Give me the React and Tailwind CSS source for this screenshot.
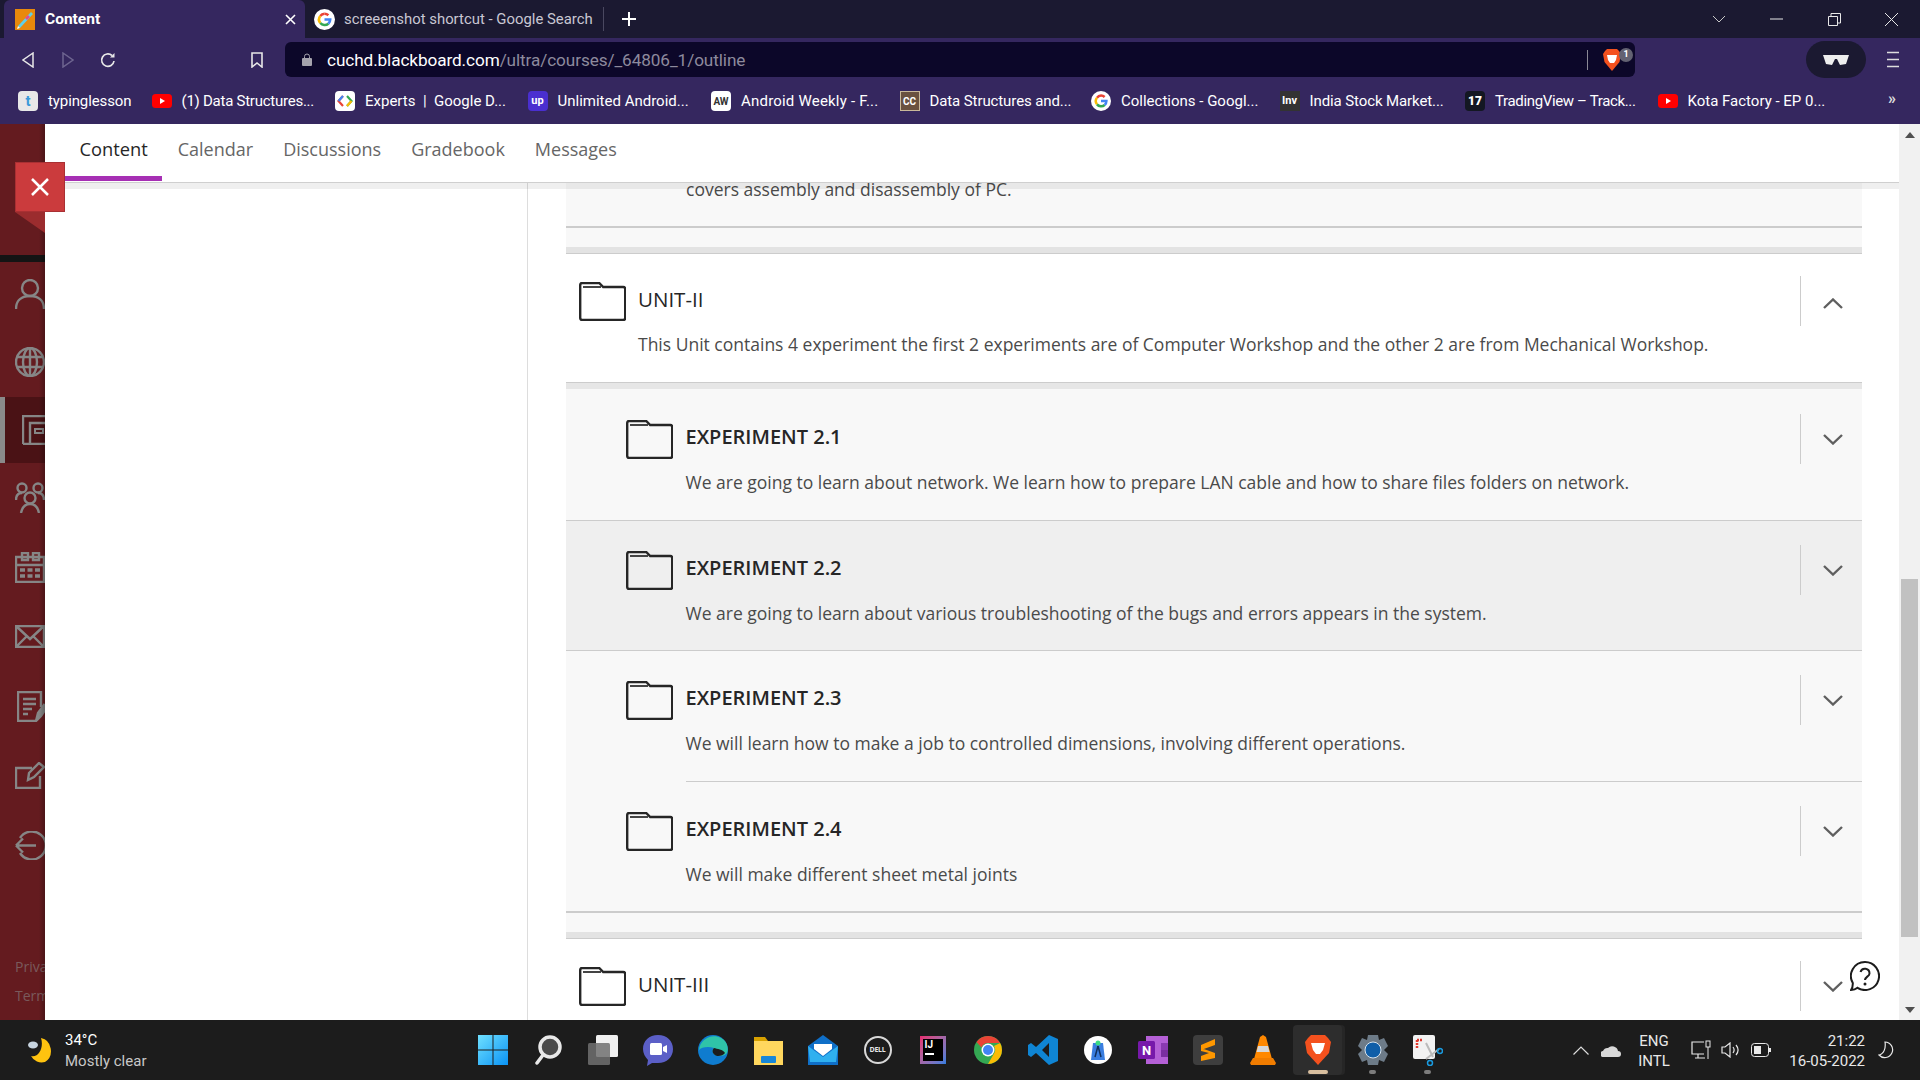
import React from "react";

const ui = { fontFamily: "Roboto, 'Noto Sans', sans-serif" };
const bb = { fontFamily: "'Open Sans', sans-serif" };

const GoogleG = ({ s = 21 }) => (
  <svg width={s} height={s} viewBox="0 0 24 24" className="shrink-0">
    <circle cx="12" cy="12" r="12" fill="#fff" />
    <path d="M12 5.5a6.5 6.5 0 0 1 4.4 1.7" stroke="#ea4335" strokeWidth="3" fill="none" />
    <path d="M7.2 8a6.5 6.5 0 0 1 4.8-2.5" stroke="#ea4335" strokeWidth="3" fill="none" />
    <path d="M7.2 16a6.5 6.5 0 0 1 0-8" stroke="#fbbc05" strokeWidth="3" fill="none" />
    <path d="M7.2 16a6.5 6.5 0 0 0 9.2.8" stroke="#34a853" strokeWidth="3" fill="none" />
    <path d="M16.4 16.8a6.5 6.5 0 0 0 2.1-4.8H12" stroke="#4285f4" strokeWidth="3" fill="none" />
  </svg>
);
const Yt = () => (
  <svg width="20" height="14" viewBox="0 0 20 14" className="shrink-0">
    <rect width="20" height="14" rx="3.5" fill="#f00" />
    <path d="M8 4l5 3-5 3z" fill="#fff" />
  </svg>
);
const Tile = ({ className, children }) => (
  <span className={`w-5 h-5 shrink-0 flex items-center justify-center overflow-hidden ${className}`}>{children}</span>
);

const bookmarks = [
  { t: "typinglesson", w: "w-[83px] tracking-[-0.1px]", i: <Tile className="bg-[#e8e8e8] rounded-sm text-[#3b9ad9] text-[15px] font-bold">t</Tile> },
  { t: "(1) Data Structures...", w: "w-[133px] tracking-[-0.25px]", i: <Yt /> },
  { t: "Experts  |  Google D...", w: "w-[142px]", i: (
    <Tile className="bg-white rounded-sm">
      <svg width="16" height="12" viewBox="0 0 16 12" fill="none"><path d="M6 1L1.500 6 6 11" stroke="#ea4335" strokeWidth="2.200" /><path d="M10 1l4.500 5L10 11" stroke="#34a853" strokeWidth="2.200" /><path d="M6 1L1.500 6" stroke="#4285f4" strokeWidth="2.200" /><path d="M14.500 6L10 11" stroke="#fbbc05" strokeWidth="2.200" /></svg>
    </Tile>
  ) },
  { t: "Unlimited Android...", w: "w-[133px]", i: <Tile className="bg-[#4a2fd0] rounded-sm text-white text-[11px] font-bold">up</Tile> },
  { t: "Android Weekly - F...", w: "w-[138px] tracking-[0.2px]", i: <Tile className="bg-white rounded-sm text-[#333] text-[10px] font-bold">AW</Tile> },
  { t: "Data Structures and...", w: "w-[141px] tracking-[-0.1px]", i: <Tile className="bg-[#6a5240] border border-[#c8b89a] text-white text-[10px] font-bold">CC</Tile> },
  { t: "Collections - Googl...", w: "w-[138px]", i: <GoogleG s={20} /> },
  { t: "India Stock Market...", w: "w-[135px] tracking-[-0.1px]", i: <Tile className="bg-[#333] text-white text-[11px] font-bold">Inv</Tile> },
  { t: "TradingView – Track...", w: "w-[142px] tracking-[-0.35px]", i: <Tile className="bg-[#131722] rounded text-white text-[12px] font-black">17</Tile> },
  { t: "Kota Factory - EP 0...", w: "w-[134px]", i: <Yt /> },
];

const TabBar = () => (
  <div className="h-[38px] bg-[#1b1931] flex items-stretch text-white shrink-0" style={ui}>
    <div className="ml-1 w-[301px] bg-[#35275f] rounded-t-md flex items-center pl-[11px] pr-[9px]">
      <svg width="20" height="21" viewBox="0 0 20 21" className="shrink-0">
        <rect width="20" height="21" fill="#e8890c" />
        <path d="M3 17L16 3l2 2L5 19z" fill="#5fd0e8" />
        <path d="M3 17l-1 3 3-1z" fill="#fff" />
        <path d="M13 6l2 2-3 3-2-2z" fill="#e84a8a" />
      </svg>
      <span className="ml-2.5 text-[15.5px] font-bold flex-1 mt-px">Content</span>
      <svg width="11" height="11" viewBox="0 0 11 11"><path d="M1 1l9 9M10 1l-9 9" stroke="#fff" strokeWidth="1.6" /></svg>
    </div>
    <div className="flex items-center pl-[9px] w-[298px]">
      <GoogleG />
      <span className="ml-[9px] text-[14.9px] text-[#c9c7d3] whitespace-nowrap">screeenshot shortcut - Google Search</span>
    </div>
    <div className="w-px h-6 bg-[#4a4860] self-center" />
    <svg width="16" height="16" viewBox="0 0 16 16" className="self-center ml-[17px]"><path d="M8 1v14M1 8h14" stroke="#fff" strokeWidth="2" /></svg>
    <div className="flex-1" />
    <div className="flex items-center mr-[22px] gap-[44.5px]">
      <svg width="14" height="8" viewBox="0 0 14 8"><path d="M1 1l6 6 6-6" stroke="#c8c8c8" fill="none" /></svg>
      <svg width="13" height="2" viewBox="0 0 13 2"><path d="M0 1h13" stroke="#e8e8e8" /></svg>
      <svg width="13" height="13" viewBox="0 0 13 13"><path d="M.5 3.5h9v9h-9zM3 3V.5h9.5V10H10" stroke="#e8e8e8" fill="none" /></svg>
      <svg width="13" height="13" viewBox="0 0 13 13"><path d="M0 0l13 13M13 0L0 13" stroke="#e8e8e8" /></svg>
    </div>
  </div>
);

const Toolbar = () => (
  <div className="h-10 bg-[#35275f] flex items-center shrink-0 pt-[3px] text-white" style={ui}>
    <svg width="12" height="16" viewBox="0 0 12 16" className="ml-[22px]"><path d="M11 1L1 8l10 7z" stroke="#e8e8e8" strokeWidth="1.5" fill="none" /></svg>
    <svg width="12" height="16" viewBox="0 0 12 16" className="ml-7"><path d="M1 1l10 7-10 7z" stroke="#6e6590" strokeWidth="1.5" fill="none" /></svg>
    <svg width="16" height="16" viewBox="0 0 16 16" className="ml-[26px]"><path d="M14 9a6.2 6.2 0 1 1-2-5.5" stroke="#e8e8e8" strokeWidth="1.7" fill="none" /><path d="M14.5 1v4.5H10z" fill="#e8e8e8" /></svg>
    <svg width="12" height="16" viewBox="0 0 12 16" className="ml-[135px]"><path d="M1 1h10v14l-5-4-5 4z" stroke="#e8e8e8" strokeWidth="1.6" fill="none" /></svg>
    <div className="ml-[22px] w-[1350px] h-[35px] bg-[#0c0729] rounded-md flex items-center pl-[17px] pr-[3px]">
      <svg width="10" height="13" viewBox="0 0 10 13"><rect y="5" width="10" height="8" rx="1" fill="#a5a3ad" /><path d="M2.5 5V3.5a2.5 2.5 0 0 1 5 0V5" stroke="#a5a3ad" fill="none" /></svg>
      <span className="ml-[15px] mt-[2px] text-[17.2px] whitespace-nowrap tracking-[-0.1px]">cuchd.blackboard.com<span className="text-[#8d8a9d]">/ultra/courses/_64806_1/outline</span></span>
      <div className="flex-1" />
      <div className="w-px h-5 bg-[#8a8895]" />
      <div className="relative ml-[15px] w-[29px] h-[22px]">
        <svg width="18" height="22" viewBox="0 0 18 22"><path d="M4 0h10l2 2 2 3-1.5 8L9 22 1.500 13 0 5l2-3z" fill="#f4511e" /><path d="M4 6h10l-1 5-2 3H7l-2-3z" fill="#fff" /></svg>
        <span className="absolute -right-[1px] -top-[1px] w-[14px] h-[14px] rounded-full bg-[#636272] text-[9px] font-bold flex items-center justify-center">1</span>
      </div>
    </div>
    <div className="ml-[171px] w-[60px] h-[37px] bg-[#1b1931] rounded-full flex items-center justify-center">
      <svg width="26" height="10" viewBox="0 0 26 10"><path d="M0 0h26l-1 3-2 6-6 1-3-6h-2l-3 6-6-1-2-6z" fill="#eee" /></svg>
    </div>
    <svg width="12" height="17" viewBox="0 0 12 17" className="ml-[21px]"><path d="M0 1.500h12M0 8.500h12M0 15.500h12" stroke="#ddd" strokeWidth="1.6" /></svg>
  </div>
);

const Bookmarks = () => (
  <div className="h-[46px] bg-[#35275f] flex items-center pl-[18px] shrink-0 text-white relative" style={ui}>
    {bookmarks.map((b) => (
      <div key={b.t} className="flex items-center gap-2.5 mr-[20.5px]">
        {b.i}
        <span className={`${b.w} text-[15px] mt-px whitespace-pre`}>{b.t}</span>
      </div>
    ))}
    <div className="flex-1" />
    <span className="mr-[24px] text-[16px] font-bold text-[#ddd] -mt-1">»</span>
  </div>
);

const Ic = ({ h = 30, w = 30, view = "0 0 30 30", children }) => (
  <svg width={w} height={h} viewBox={view} fill="none" stroke="#868686" strokeWidth="2.4" className="shrink-0">{children}</svg>
);

const Sidebar = () => (
  <div className="relative w-[45px] shrink-0 bg-[#641b1f] flex flex-col overflow-hidden">
    <div className="h-[131px] shrink-0" />
    <div className="h-[7px] shrink-0 bg-[#141414]" />
    <div className="h-[64px] shrink-0 pl-[15px] flex items-center">
      <Ic><circle cx="15" cy="9" r="8" /><path d="M1 30c0-9 6-13 14-13s14 4 14 13" /></Ic>
    </div>
    <div className="h-[71px] shrink-0 pl-[15px] flex items-center">
      <Ic><circle cx="15" cy="15" r="14" /><ellipse cx="15" cy="15" rx="7" ry="14" /><path d="M15 1v28M2 10h26M2 20h26" /></Ic>
    </div>
    <div className="h-[66px] shrink-0 bg-[#4a1215] border-l-[5px] border-[#8a8a8a] pl-[17px] flex items-center">
      <Ic view="0 0 30 30"><path d="M1 29V1h29M1 29h29M8 29V8h22" /><rect x="13" y="14" width="8" height="4" strokeWidth="2" /></Ic>
    </div>
    <div className="h-[69.5px] shrink-0 pl-[15px] flex items-center">
      <Ic h={31} view="0 0 30 31"><circle cx="7" cy="6" r="4.500" /><circle cx="23" cy="6" r="4.500" /><circle cx="15" cy="16" r="5.500" /><path d="M1 18c0-4 2-7 6-7M29 18c0-4-2-7-6-7M6 31c1-5 4-9 9-9s8 4 9 9" /></Ic>
    </div>
    <div className="h-[69.5px] shrink-0 pl-[15px] flex items-center">
      <Ic h={31} view="0 0 30 31"><path d="M1 5h28v25H1zM1 13h28M7 1h6v7H7zM18 1h6v7h-6z" /><path d="M5 18h20M5 24h20" strokeWidth="3.500" strokeDasharray="5 2.500" /></Ic>
    </div>
    <div className="h-[69.5px] shrink-0 pl-[15px] flex items-center">
      <Ic h={23} view="0 0 30 23"><path d="M1 1h28v21H1zM1 1l14 13L29 1M1 22l11-11M29 22L18 11" /></Ic>
    </div>
    <div className="h-[69.5px] shrink-0 pl-[17px] flex items-center">
      <Ic h={31} view="0 0 30 31"><path d="M24 16V1H1v29h18M6 8h13M6 13h13M6 18h9M6 23h5" /><path d="M19 30l2-8 6-8 3 2-6 9z" fill="#868686" /></Ic>
    </div>
    <div className="h-[69.5px] shrink-0 pl-[15px] flex items-center">
      <Ic h={27} view="0 0 30 27"><path d="M17 6H1v20h24V14M13 18l1-7L24 1l5 4-10 10z" /></Ic>
    </div>
    <div className="h-[69.5px] shrink-0 pl-[15px] flex items-center">
      <Ic h={29} view="0 0 30 29"><path d="M5 7a14 14 0 1 1 0 15M1 14.500h20M1 14.500l7-7M1 14.500l7 7" /></Ic>
    </div>
    <div className="mt-auto pb-[10px] pl-[15px] text-[14px] leading-[29px] text-[#7a5a5c] whitespace-nowrap" style={bb}>
      <div>Priva</div>
      <div>Term</div>
    </div>
    <div className="absolute right-0 top-0 bottom-0 w-[6px] bg-gradient-to-r from-transparent to-[#00000040]" />
  </div>
);

const Nav = () => (
  <div className="h-[59px] shrink-0 bg-white border-b border-[#cfcfcf] pl-5 flex items-stretch text-[18px] text-[#666]" style={bb}>
    <div className="px-[14.5px] text-[18.3px] flex items-center border-b-[5px] border-[#a62fb4] text-[#262626] h-[57px] pb-[2px]">Content</div>
    <div className="pl-[15.5px] pr-[15px] flex items-center pb-[8px]">Calendar</div>
    <div className="px-[15px] flex items-center pb-[8px]">Discussions</div>
    <div className="px-[15px] flex items-center pb-[8px]">Gradebook</div>
    <div className="px-[15px] flex items-center pb-[8px]">Messages</div>
  </div>
);

const Folder = () => (
  <svg width="47" height="39" viewBox="0 0 47 39" fill="none" className="shrink-0">
    <path d="M1.200 3q0-2 2-2h17l4 4h20q2 0 2 2v29q0 2-2 2H3.200q-2 0-2-2z" stroke="#262626" strokeWidth="2.400" />
    <path d="M4 5h18" stroke="#444" strokeWidth="2" />
  </svg>
);

const Chevron = ({ up }) => (
  <svg width="20" height="11" viewBox="0 0 20 11" fill="none" className={up ? "mt-1" : ""}>
    <path d={up ? "M1 10L10 1.500 19 10" : "M1 1l9 8.500L19 1"} stroke="#5f5f5f" strokeWidth="2.400" />
  </svg>
);

const Toggle = ({ up, top }) => (
  <div className={`w-[62px] shrink-0 h-[50px] border-l border-[#cccccc] flex items-center justify-center pl-[3px] ${top}`}>
    <Chevron up={up} />
  </div>
);

const Unit = ({ title, desc, up }) => (
  <div className="flex items-start bg-white pl-[13px]">
    <div className="mt-[28px]"><Folder /></div>
    <div className="ml-3 flex-1 text-[#262626]">
      <div className="mt-[32.500px] text-[20.5px] leading-6">{title}</div>
      {desc && <div className="mt-[21.500px] mb-[26px] text-[17.5px] leading-6 text-[#4a4a4a]">{desc}</div>}
    </div>
    <Toggle up={up} top="mt-[22px]" />
  </div>
);

const Experiment = ({ title, desc, className }) => (
  <div className={`flex items-start pl-[60px] ${className}`}>
    <div className="mt-[30px]"><Folder /></div>
    <div className="ml-[12.500px] flex-1">
      <div className="mt-[34.5px] text-[20px] leading-6 font-semibold text-[#262626]">{title}</div>
      <div className="mt-[21.500px] text-[17.5px] leading-6 text-[#4a4a4a]">{desc}</div>
    </div>
    <Toggle top="mt-[24px]" />
  </div>
);

const Strip = () => (
  <>
    <div className="h-[19px] bg-[#f8f8f8]" />
    <div className="h-[6px] bg-[#e3e3e3]" />
    <div className="h-px bg-[#cccccc]" />
  </>
);

const Outline = () => (
  <div className="flex-1 pl-[38px] pr-[37px] min-w-0 overflow-hidden" style={bb}>
    <div className="h-[43px] bg-[#f8f8f8] pl-[120px] text-[17.5px] text-[#4a4a4a] border-b-2 border-[#cccccc] box-content">
      <div className="h-[12px] leading-[12px] whitespace-nowrap">covers assembly and disassembly of PC.</div>
    </div>
    <Strip />
    <Unit up title="UNIT-II" desc="This Unit contains 4 experiment the first 2 experiments are of Computer Workshop and the other 2 are from Mechanical Workshop." />
    <div className="h-px bg-[#cccccc]" />
    <div className="h-[6px] bg-[#e6e6e6]" />
    <div className="h-px bg-[#f8f8f8]" />
    <Experiment className="h-[131px] bg-[#f8f8f8] border-b border-[#cccccc]" title="EXPERIMENT 2.1" desc="We are going to learn about network. We learn how to prepare LAN cable and how to share files folders on network." />
    <Experiment className="h-[130px] bg-[#efefef] border-b border-[#cccccc]" title="EXPERIMENT 2.2" desc="We are going to learn about various troubleshooting of the bugs and errors appears in the system." />
    <Experiment className="h-[130px] bg-[#f8f8f8]" title="EXPERIMENT 2.3" desc="We will learn how to make a job to controlled dimensions, involving different operations." />
    <div className="h-px bg-[#f8f8f8] pl-[120px]"><div className="h-px bg-[#cccccc]" /></div>
    <Experiment className="h-[129px] bg-[#f8f8f8]" title="EXPERIMENT 2.4" desc="We will make different sheet metal joints" />
    <div className="h-[2px] bg-[#cccccc]" />
    <Strip />
    <Unit title="UNIT-III" />
  </div>
);

const Scrollbar = () => (
  <div className="w-[21px] shrink-0 bg-[#f1f1f1] flex flex-col items-center">
    <div className="h-[21px] shrink-0 flex items-center justify-center">
      <svg width="10" height="6" viewBox="0 0 10 6"><path d="M5 0l5 6H0z" fill="#505050" /></svg>
    </div>
    <div className="h-[434px] shrink-0" />
    <div className="w-[17px] h-[358px] shrink-0 bg-[#c1c1c1]" />
    <div className="flex-1" />
    <div className="h-[21px] shrink-0 flex items-center justify-center">
      <svg width="10" height="6" viewBox="0 0 10 6"><path d="M5 6l5-6H0z" fill="#505050" /></svg>
    </div>
  </div>
);

const Overlay = () => (
  <>
    <div className="absolute left-[15px] top-[38px] w-[50px] h-[50px] bg-[#cb3b3d] border border-[#a93033] flex items-center justify-center z-10">
      <svg width="18" height="18" viewBox="0 0 18 18"><path d="M1 1l16 16M17 1L1 17" stroke="#fff" strokeWidth="2.500" /></svg>
    </div>
    <svg width="30" height="21" viewBox="0 0 30 21" className="absolute left-[15px] top-[88px] z-10"><path d="M0 0h30v21z" fill="#9b2c2e" /></svg>
    <svg width="30" height="30" viewBox="0 0 30 30" fill="none" className="absolute left-[1850px] top-[837px] z-10">
      <path d="M15 1a14 14 0 1 1-7.500 25.800Q5 29 1 29q2-2.500 1.800-7A14 14 0 0 1 15 1z" stroke="#1c1c1c" strokeWidth="2" />
      <path d="M10.500 11a4.600 4.600 0 0 1 9 1.400c0 3-4.500 3.500-4.500 6.600" stroke="#1c1c1c" strokeWidth="2" />
      <circle cx="15" cy="23" r="1.500" fill="#1c1c1c" />
    </svg>
  </>
);

const TB = ({ children, className = "" }) => (
  <div className={`relative w-[55px] h-[60px] shrink-0 flex items-center justify-center ${className}`}>{children}</div>
);

const Taskbar = () => (
  <div className="relative h-[60px] shrink-0 bg-[#1c1c1c] flex items-center text-white" style={ui}>
    <div className="w-[465px] shrink-0 flex items-center pl-[28px]">
      <svg width="24" height="28" viewBox="0 0 24 28">
        <path d="M13 2a12 13 0 0 1 4 24 12 12 0 0 1-14-6c8 2 13-9 10-18z" fill="#ffc30f" />
        <ellipse cx="5" cy="9" rx="5" ry="3.500" fill="#c7d4e0" />
      </svg>
      <div className="ml-[13px] text-[15px] leading-[21px] mt-px">
        <div>34°C</div>
        <div className="text-[#c8c8c8]">Mostly clear</div>
      </div>
    </div>
    <div className="flex items-center">
      <TB>
        <svg width="30" height="30" viewBox="0 0 30 30"><defs><linearGradient id="w" x1="0" y1="0" x2="1" y2="1"><stop offset="0" stopColor="#6fe0ff" /><stop offset="1" stopColor="#0a93f5" /></linearGradient></defs><path d="M0 0h14.500v14.500H0zM15.500 0H30v14.500H15.500zM0 15.500h14.500V30H0zM15.500 15.500H30V30H15.500z" fill="url(#w)" /></svg>
      </TB>
      <TB><svg width="28" height="30" viewBox="0 0 28 30" fill="none"><circle cx="16" cy="12" r="10" stroke="#e8e8e8" strokeWidth="3.500" fill="#4a4a4a" /><path d="M9 20l-6 8" stroke="#e8e8e8" strokeWidth="3.500" strokeLinecap="round" /></svg></TB>
      <TB><svg width="30" height="30" viewBox="0 0 30 30"><rect x="8" y="0" width="22" height="22" rx="1.500" fill="#f0f0f0" /><rect x="0" y="8" width="22" height="22" rx="1.500" fill="#707070" fillOpacity="0.85" /></svg></TB>
      <TB><svg width="30" height="31" viewBox="0 0 30 31"><path d="M15 0c9 0 15 6 15 14s-6 14-15 14h-6l-5 3 1-6C2 22 0 18 0 14 0 6 6 0 15 0z" fill="#5b5fc7" /><rect x="7" y="8" width="12" height="12" rx="1.500" fill="#fff" /><path d="M20 12l4-2v8l-4-2z" fill="#fff" /></svg></TB>
      <TB><svg width="30" height="30" viewBox="0 0 30 30" fill="none"><circle cx="15" cy="15" r="15" fill="#0f7ccf" /><path d="M1 15C2 4 14-2 23 3c6 3 8 10 6 15-2 3-8 4-12 2-3-2-3-5-1-7-5-2-13-1-15 2z" fill="#2fc4a8" /><path d="M16 13c3 1 9 1 11 5-2 3-8 4-10 2-3-2-3-5-1-7z" fill="#1c1c1c" /></svg></TB>
      <TB><svg width="30" height="30" viewBox="0 0 30 30"><path d="M1 2h11l3 4H1z" fill="#d8a100" /><path d="M1 6h29v24H1z" fill="#ffd75e" /><rect x="8" y="21" width="15" height="7" rx="1" fill="#1787d8" /></svg></TB>
      <TB><svg width="30" height="30" viewBox="0 0 30 30"><path d="M15 0L0 11v19h30V11z" fill="#0f6fc8" /><path d="M0 11l15 11 15-11-2 16H2z" fill="#2fb0ef" /><path d="M6 9h18v5l-9 7-9-7z" fill="#fff" /></svg></TB>
      <TB>
        <div className="w-[28px] h-[28px] rounded-full border-2 border-[#d8d8d8] flex items-center justify-center text-[7px] font-bold text-[#e8e8e8] tracking-[-0.3px]" style={bb}>DELL</div>
      </TB>
      <TB>
        <div className="w-[26px] h-[28px] bg-gradient-to-br from-[#e6246f] to-[#2b7de0] p-[3px]">
          <div className="w-full h-full bg-black text-[10px] font-bold text-white pl-[2px] leading-[11px]">IJ<div className="w-[9px] h-[1.5px] bg-white mt-[3px]" /></div>
        </div>
      </TB>
      <TB><svg width="28" height="28" viewBox="0 0 28 28"><circle cx="14" cy="14" r="14" fill="#34a853" /><path d="M14 0a14 14 0 0 1 12.100 7H14a7 7 0 0 0-6.500 4.500L2.500 6A14 14 0 0 1 14 0z" fill="#ea4335" /><path d="M26.100 7A14 14 0 0 1 14 28l6-10.500A7 7 0 0 0 20 10z" fill="#fbbc05" /><circle cx="14" cy="14" r="6.500" fill="#fff" /><circle cx="14" cy="14" r="5" fill="#4285f4" /></svg></TB>
      <TB><svg width="30" height="30" viewBox="0 0 30 30"><path d="M21 0l9 4v22l-9 4L8 18l-5 4-3-2v-10l3-2 5 4zM21 8l-7 7 7 7z" fill="#0f85d4" fillRule="evenodd" /></svg></TB>
      <TB>
        <div className="w-[28px] h-[28px] rounded-full bg-white flex items-center justify-center">
          <svg width="14" height="20" viewBox="0 0 14 20"><path d="M2 3h10l2 17H0z" fill="#3a7ee0" /><path d="M7 6l-3 11M7 6l3 11" stroke="#10305e" strokeWidth="1.500" /><circle cx="7" cy="3" r="2.500" fill="#3ddc84" /></svg>
        </div>
      </TB>
      <TB><svg width="30" height="28" viewBox="0 0 30 28"><path d="M8 0h22v28H8z" fill="#b45fd6" /><path d="M23 7h7v7h-7z" fill="#8a3ab0" /><path d="M23 14h7v7h-7z" fill="#7a2ea0" /><rect x="0" y="5" width="17" height="18" rx="1.500" fill="#7719aa" /><text x="4" y="19" fontSize="13" fontWeight="700" fill="#fff" fontFamily="Roboto">N</text></svg></TB>
      <TB>
        <div className="w-[30px] h-[30px] bg-[#3e3e3e] rounded-sm flex items-center justify-center">
          <svg width="16" height="22" viewBox="0 0 16 22"><path d="M15 0v6L1 11V6zM1 9l14 5v5L1 22v-5l8-3-8-2z" fill="#ff9800" /></svg>
        </div>
      </TB>
      <TB><svg width="26" height="30" viewBox="0 0 26 30"><path d="M13 0l3 2 6 22H4L10 2z" fill="#ff8800" /><path d="M8 11h10l1.500 6h-13z" fill="#d8d8d8" /><path d="M0 28l3-5h20l3 5-1 2H1z" fill="#f07c00" /></svg></TB>
      <TB>
        <div className="absolute left-[3px] top-[5px] w-[49px] h-[50px] rounded bg-[#2d2d2d] shadow-[3px_0_0_#262626]" />
        <div className="absolute left-[18px] top-[50px] w-5 h-1 rounded-sm bg-[#d8bf9f]" />
        <svg width="26" height="30" viewBox="0 0 26 30" className="relative"><path d="M6 0h14l3 3 3 4-2 11-11 12L2 18 0 7l3-4z" fill="#f4511e" /><path d="M6 8h14l-2 7-3 4h-4l-3-4z" fill="#fff" /></svg>
      </TB>
      <TB>
        <div className="absolute left-[24px] top-[50px] w-[7px] h-1 rounded-sm bg-[#7c7c7c]" />
        <svg width="30" height="30" viewBox="0 0 30 30"><path d="M10 0h10l1 5 5-2 4 8-4 4 4 4-4 8-5-2-1 5H10l-1-5-5 2-4-8 4-4-4-4 4-8 5 2z" fill="#6d7b88" /><circle cx="15" cy="15" r="8" fill="#0f5ea8" stroke="#d8e4ee" strokeWidth="1" /></svg>
      </TB>
      <TB>
        <div className="absolute left-[24px] top-[50px] w-[7px] h-1 rounded-sm bg-[#7c7c7c]" />
        <svg width="30" height="31" viewBox="0 0 30 31" fill="none"><rect x="0" y="0" width="22" height="24" rx="2" fill="#f2f2f2" /><path d="M4 5h6M4 5v9" stroke="#e03a2e" strokeWidth="2.500" strokeDasharray="2 1" /><path d="M13 8l7 14M26 14L13 24" stroke="#bbb" strokeWidth="2" /><circle cx="27" cy="16" r="2.500" stroke="#1a9be0" strokeWidth="1.500" /><circle cx="17" cy="28" r="2.500" stroke="#1a9be0" strokeWidth="1.500" /></svg>
      </TB>
    </div>
    <div className="absolute left-[1573px] top-0 h-full flex items-center">
      <svg width="16" height="9" viewBox="0 0 16 9" fill="none"><path d="M.5 8.500L8 1l7.500 7.500" stroke="#ddd" strokeWidth="1.200" /></svg>
      <svg width="20" height="13" viewBox="0 0 20 13" className="ml-3"><path d="M3 13a3 3 0 0 1-1-6 5 5 0 0 1 5-3 6 6 0 0 1 10 3 3 3 0 0 1 0 6z" fill="#d8d8d8" /></svg>
      <div className="ml-[17px] w-[32px] text-[15px] leading-[20px] mt-[2px] text-center text-[#e8e8e8]"><div>ENG</div><div>INTL</div></div>
      <svg width="20" height="20" viewBox="0 0 20 20" fill="none" className="ml-[21px]"><path d="M13 2H1v12h12M4 18h10M7 14v4" stroke="#e8e8e8" strokeWidth="1.200" /><rect x="15" y="1" width="4" height="6" stroke="#e8e8e8" /><path d="M17 7v12" stroke="#e8e8e8" /></svg>
      <svg width="20" height="16" viewBox="0 0 20 16" fill="none" className="ml-[10px]"><path d="M1 5h3l5-4v14l-5-4H1zM12 5c1.500 2 1.500 4 0 6M15 3c2.500 3 2.500 7 0 10" stroke="#e8e8e8" strokeWidth="1.200" /></svg>
      <svg width="20" height="14" viewBox="0 0 20 14" fill="none" className="ml-[10px]"><rect x=".5" y=".5" width="17" height="13" rx="3" stroke="#e8e8e8" /><rect x="3" y="3" width="7" height="8" fill="#e8e8e8" /><path d="M19 5v4" stroke="#e8e8e8" strokeWidth="2" /></svg>
    </div>
    <div className="absolute right-[55px] top-0 h-full flex flex-col justify-center items-end text-[15px] leading-[20px] text-[#e8e8e8] mt-px">
      <div>21:22</div>
      <div>16-05-2022</div>
    </div>
    <svg width="16" height="18" viewBox="0 0 16 18" fill="none" className="absolute right-[26px] top-[21px]"><path d="M7 1a7.800 7.800 0 1 1-6 13C6 13 8 7 7 1z" stroke="#e8e8e8" strokeWidth="1.200" /></svg>
  </div>
);

export default function App() {
  return (
    <div className="w-[1920px] h-screen flex flex-col overflow-hidden bg-white">
      <TabBar />
      <Toolbar />
      <Bookmarks />
      <div className="flex-1 min-h-0 flex relative overflow-hidden">
        <Sidebar />
        <div className="flex-1 min-w-0 flex flex-col">
          <Nav />
          <div className="relative flex-1 min-h-0 flex overflow-hidden">
            <div className="w-[483px] shrink-0 border-r border-[#dddddd] bg-white" />
            <Outline />
            <div className="absolute left-0 right-0 top-0 h-[6px] bg-[#00000010]" />
          </div>
        </div>
        <Scrollbar />
        <Overlay />
      </div>
      <Taskbar />
    </div>
  );
}
